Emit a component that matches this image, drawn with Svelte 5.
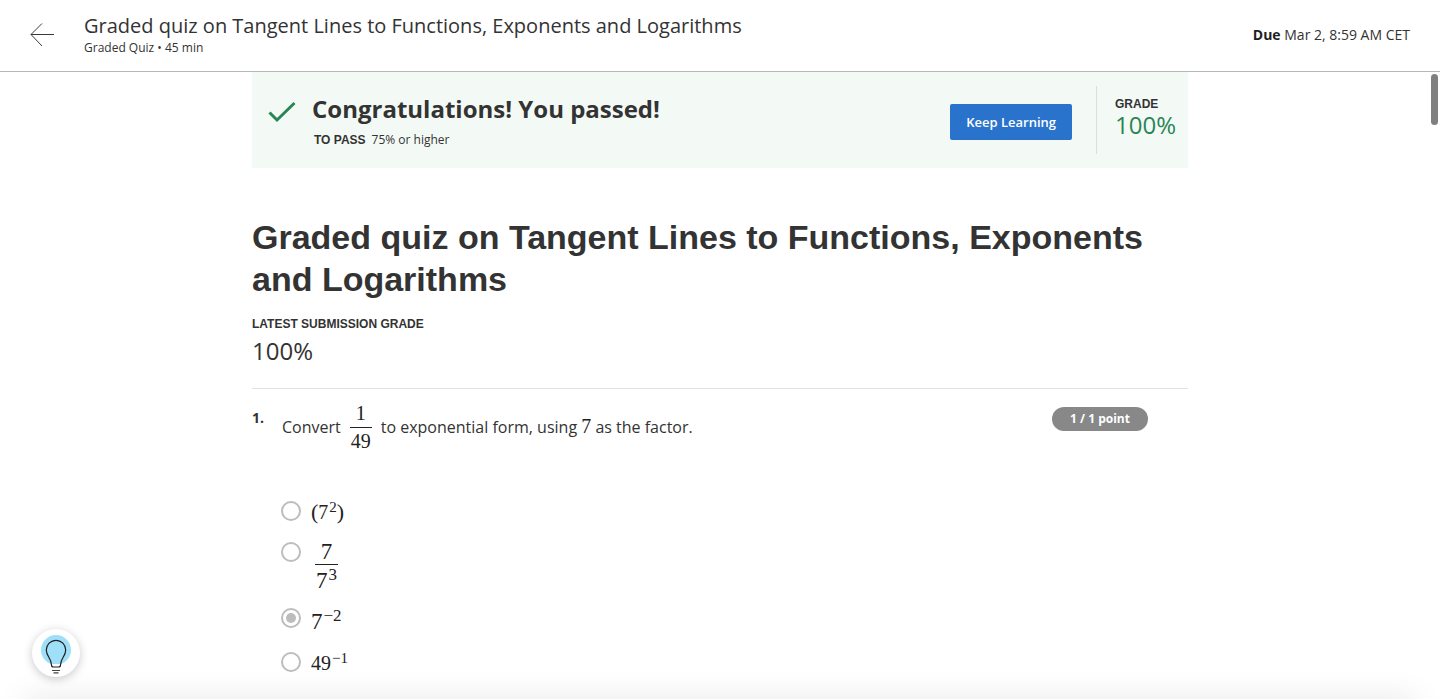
<script>
  const title = 'Graded quiz on Tangent Lines to Functions, Exponents and Logarithms';
  let selected = $state('c');
</script>

<div class="app">
  <header>
    <a class="back" href="#back" aria-label="Back">
      <svg width="24" height="24" viewBox="0 0 24 24" fill="none" stroke="#373a3c">
        <path d="M24 11.5H1" />
        <path d="M12 0.5 1 11.5 12 23" />
      </svg>
    </a>
    <div class="heading">
      <div class="title">{title}</div>
      <div class="meta">Graded Quiz • 45 min</div>
    </div>
    <div class="due"><b>Due</b> Mar 2, 8:59 AM CET</div>
  </header>

  <main>
    <div class="content">
      <section class="banner">
        <svg class="check" width="28" height="22" viewBox="0 0 28 22" fill="none" stroke="#2a8555" stroke-width="3">
          <path d="M1.5 11.5 9 19 26.500 2" />
        </svg>
        <div class="result">
          <h2>Congratulations! You passed!</h2>
          <p><span class="label">TO PASS</span><span>75% or higher</span></p>
        </div>
        <button class="keep" type="button">Keep Learning</button>
        <div class="grade">
          <span class="label">GRADE</span>
          <span class="score">100%</span>
        </div>
      </section>

      <h1>{title}</h1>
      <div class="label latest">LATEST SUBMISSION GRADE</div>
      <div class="total">100%</div>

      <section class="question">
        <div class="number">1.</div>
        <form>
          <div class="prompt" id="prompt">
            <span>Convert</span>
            <span class="frac math"><span>1</span><span class="den">49</span></span>
            <span>to exponential form, using <span class="math inline">7</span> as the factor.</span>
          </div>
          <div class="options" role="radiogroup" aria-labelledby="prompt">
            <label class="short">
              <input type="radio" name="q1" value="a" bind:group={selected} />
              <span class="math"><span class="paren">(</span>7<sup>2</sup><span class="paren">)</span></span>
            </label>
            <label class="tall">
              <input type="radio" name="q1" value="b" bind:group={selected} />
              <span class="frac math large"><span>7</span><span class="den">7<sup>3</sup></span></span>
            </label>
            <label class="power">
              <input type="radio" name="q1" value="c" bind:group={selected} />
              <span class="math large">7<sup>−2</sup></span>
            </label>
            <label class="short">
              <input type="radio" name="q1" value="d" bind:group={selected} />
              <span class="math">49<sup>−1</sup></span>
            </label>
          </div>
        </form>
        <div class="points">1 / 1 point</div>
      </section>
    </div>
    <div class="thumb"></div>
    <div class="fade"></div>
  </main>

  <button class="hint" type="button" aria-label="Hints">
    <svg width="48" height="48" viewBox="0 0 48 48" fill="none">
      <circle cx="24" cy="21" r="15" fill="#9fdff8" />
      <path d="M19.500 35h9v3h-9z" fill="#fff" />
      <path d="M19.500 36c0-7-5.200-8.500-5.200-15a9.700 9.700 0 0 1 19.400 0C33.700 27.500 28.500 29 28.500 36c0 1.300-.8 2-2 2h-5c-1.200 0-2-.7-2-2Z" stroke="#1f1f1f" stroke-width="1.200" />
      <path d="M20 41.500h8M21.500 43.800h5" stroke="#444" stroke-width="1.200" />
    </svg>
  </button>
</div>

<style>
  :global(body) {
    margin: 0;
    background: #fff;
  }
  .app {
    height: 100vh;
    display: flex;
    flex-direction: column;
    overflow: hidden;
    color: #333;
    font: 16px/24px "Open Sans", sans-serif;
  }
  header {
    display: flex;
    align-items: center;
    box-sizing: border-box;
    height: 72px;
    flex: none;
    padding: 0 30px 2px;
    border-bottom: 1px solid #b3b8b5;
  }
  .back {
    display: flex;
  }
  .heading {
    flex: 1;
    padding: 2px 0 0 30px;
  }
  .title {
    font-size: 20px;
    line-height: 24px;
  }
  .meta {
    font-size: 12px;
    line-height: 20px;
  }
  .due {
    font-size: 14px;
  }
  .due b {
    font-weight: 700;
    color: #1f1f1f;
  }
  main {
    position: relative;
    flex: 1;
    min-height: 0;
    overflow: hidden;
  }
  .content {
    max-width: 936px;
    margin: 0 auto;
  }
  .banner {
    display: flex;
    align-items: center;
    box-sizing: border-box;
    height: 96px;
    padding: 0 12px 0 16px;
    background: #f3faf6;
  }
  .check {
    align-self: flex-start;
    margin-top: 29px;
  }
  .result {
    flex: 1;
    padding: 4px 0 0 16px;
  }
  h2 {
    margin: 0;
    font-size: 24px;
    line-height: 36px;
    font-weight: 700;
  }
  .result p {
    display: flex;
    gap: 6px;
    margin: 0;
    padding: 3px 2px;
    font-size: 12px;
    line-height: 20px;
  }
  .label {
    font-family: "Liberation Sans", Arial, sans-serif;
    font-size: 12px;
    line-height: 20px;
    font-weight: 700;
  }
  .keep {
    height: 36px;
    margin: 4px 24px 0 0;
    padding: 0 16px;
    border: 0;
    border-radius: 2px;
    background: #2a73cc;
    color: #fff;
    font: 600 13px/20px "Open Sans", sans-serif;
  }
  .grade {
    display: flex;
    flex-direction: column;
    box-sizing: border-box;
    height: 68px;
    padding: 11px 0 0 18px;
    border-left: 1px solid #ddd;
  }
  .grade .label {
    line-height: 14px;
  }
  .score {
    color: #2a8555;
    font-size: 24px;
    line-height: 28px;
  }
  h1 {
    margin: 48px 0 14px;
    font: 700 34px/42px "Liberation Sans", Arial, sans-serif;
  }
  .total {
    margin-bottom: 20px;
    font-size: 24px;
    line-height: 34px;
  }
  .question {
    display: flex;
    align-items: flex-start;
    padding: 18px 40px 0 0;
    border-top: 1px solid #e1e1e1;
  }
  .number {
    width: 30px;
    font-size: 14px;
    font-weight: 700;
    line-height: 22px;
  }
  form {
    flex: 1;
  }
  .prompt {
    display: flex;
    align-items: center;
    height: 40px;
    gap: 9px;
  }
  .math {
    font-family: "Liberation Serif", "Times New Roman", serif;
    font-size: 20px;
    line-height: 22px;
    color: #222;
  }
  .inline {
    line-height: 0;
  }
  .large {
    font-size: 23px;
  }
  .paren {
    font-size: 22px;
    line-height: 0;
  }
  .frac {
    display: inline-flex;
    flex-direction: column;
    align-items: center;
  }
  .prompt .den {
    margin-top: 3px;
    padding-top: 2px;
  }
  .den {
    padding: 0 1px;
    border-top: 1px solid #222;
  }
  sup {
    padding-left: 1px;
    font-size: 15px;
    line-height: 0;
    vertical-align: 7px;
  }
  .large sup {
    font-size: 17px;
    vertical-align: 8px;
  }
  .options {
    padding-top: 54px;
  }
  label {
    display: flex;
    align-items: flex-start;
    gap: 10px;
  }
  .short {
    height: 41px;
  }
  .tall {
    height: 66px;
  }
  .tall .frac {
    padding-left: 4px;
    line-height: 20px;
  }
  .tall .den {
    margin-top: 2px;
    padding-top: 6px;
  }
  .power {
    height: 44px;
  }
  .power .math {
    line-height: 28px;
  }
  input {
    appearance: none;
    display: grid;
    place-items: center;
    flex: none;
    box-sizing: border-box;
    width: 20px;
    height: 20px;
    margin: 0 0 0 -1px;
    border: 2px solid #bdbdbd;
    border-radius: 50%;
    background: #fff;
  }
  input:checked::before {
    content: "";
    width: 10px;
    height: 10px;
    border-radius: 50%;
    background: #bdbdbd;
  }
  .points {
    box-sizing: border-box;
    width: 96px;
    border-radius: 12px;
    background: #888;
    color: #fff;
    font-size: 12px;
    font-weight: 700;
    text-align: center;
  }
  .thumb {
    position: absolute;
    top: 2px;
    right: 2px;
    width: 7px;
    height: 51px;
    border-radius: 4px;
    background: #808080;
  }
  .fade {
    position: absolute;
    right: 24px;
    bottom: -24px;
    left: 24px;
    height: 24px;
    box-shadow: 0 0 32px rgba(0, 0, 0, 0.1);
    pointer-events: none;
  }
  .hint {
    position: fixed;
    bottom: 22px;
    left: 32px;
    width: 48px;
    height: 48px;
    padding: 0;
    border: 0;
    border-radius: 50%;
    background: #fff;
    box-shadow: 0 2px 10px rgba(0, 0, 0, 0.22);
  }
</style>
